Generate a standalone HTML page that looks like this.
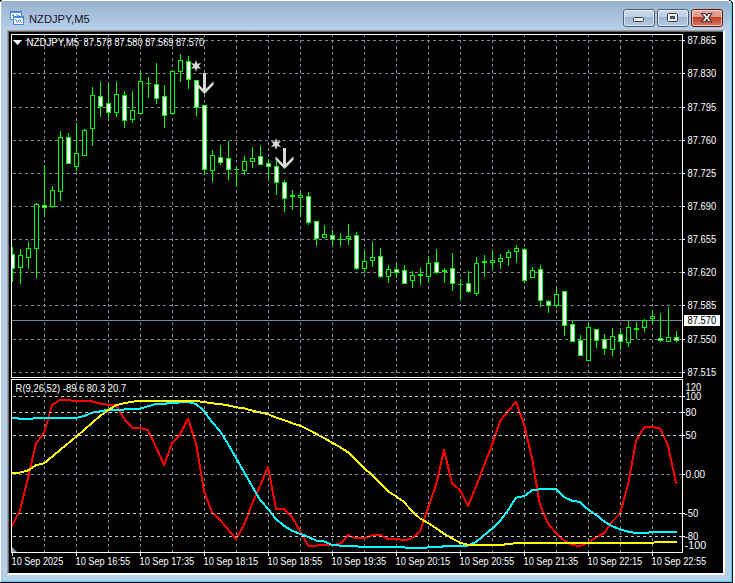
<!DOCTYPE html>
<html><head><meta charset="utf-8"><title>NZDJPY,M5</title>
<style>html,body{margin:0;padding:0;width:735px;height:583px;overflow:hidden;background:#fff} svg{display:block}</style>
</head><body><svg width="735" height="583" viewBox="0 0 735 583"><rect x="0" y="0" width="735" height="583" fill="#ffffff" />
<defs>
<linearGradient id="tb" x1="0" y1="0" x2="0" y2="1">
<stop offset="0" stop-color="#97b1ce"/><stop offset="1" stop-color="#bad0e9"/></linearGradient>
<linearGradient id="btn" x1="0" y1="0" x2="0" y2="1">
<stop offset="0" stop-color="#c9daee"/><stop offset="0.45" stop-color="#bccfe6"/><stop offset="0.46" stop-color="#9db6d3"/><stop offset="1" stop-color="#b9cde6"/></linearGradient>
<linearGradient id="cls" x1="0" y1="0" x2="0" y2="1">
<stop offset="0" stop-color="#eaa99a"/><stop offset="0.45" stop-color="#e29482"/><stop offset="0.46" stop-color="#bf3f22"/><stop offset="1" stop-color="#d77c66"/></linearGradient>
</defs>
<rect x="1" y="1" width="731" height="581" fill="#b9cfe8" />
<rect x="1" y="1" width="731" height="29" fill="url(#tb)" />
<rect x="1" y="1" width="1" height="580" fill="#b2c9e5" />
<rect x="731" y="2" width="1" height="580" fill="#44cdf5" />
<rect x="732" y="2" width="1" height="581" fill="#1c1414" />
<rect x="1" y="581" width="731" height="1" fill="#44cdf5" />
<rect x="0" y="582" width="733" height="1" fill="#141010" />
<rect x="0" y="0" width="2" height="1" fill="#262626" />
<rect x="0" y="1" width="1" height="1" fill="#262626" />
<rect x="1" y="1" width="1" height="1" fill="#d8e4f0" />
<rect x="2" y="1" width="1" height="1" fill="#a8bfdc" />
<rect x="1" y="2" width="1" height="1" fill="#a8bfdc" />
<rect x="729" y="0" width="2" height="1" fill="#1e2a2a" />
<rect x="729" y="1" width="2" height="2" fill="#b8ecfa" />
<rect x="731" y="1" width="1" height="2" fill="#1e2a2a" />
<rect x="733" y="0" width="2" height="583" fill="#ffffff" />
<rect x="7" y="30" width="718" height="545" fill="#ffffff" />
<rect x="7" y="30" width="717" height="1" fill="#a0a0a0" />
<rect x="7" y="30" width="1" height="544" fill="#a0a0a0" />
<rect x="8" y="31" width="715" height="1" fill="#696969" />
<rect x="8" y="31" width="1" height="542" fill="#696969" />
<rect x="9" y="32" width="714" height="541" fill="#000000" />
<g shape-rendering="crispEdges">
<rect x="10" y="11" width="12" height="9" fill="#4a86f4"/>
<rect x="11" y="13" width="10" height="6" fill="#fffff6"/>
<rect x="13" y="16" width="11" height="9" fill="#4a86f4"/>
<rect x="14" y="18" width="9" height="6" fill="#fffff6"/>
<rect x="12" y="11" width="1" height="1" fill="#3a8a6a"/><rect x="16" y="11" width="1" height="1" fill="#3a8a6a"/><rect x="20" y="11" width="1" height="1" fill="#3a8a6a"/>
<rect x="10" y="13" width="1" height="1" fill="#3a8a6a"/><rect x="10" y="17" width="1" height="1" fill="#3a8a6a"/>
<rect x="15" y="16" width="1" height="1" fill="#3a8a6a"/><rect x="19" y="16" width="1" height="1" fill="#3a8a6a"/><rect x="23" y="18" width="1" height="1" fill="#3a8a6a"/>
<rect x="13" y="20" width="1" height="1" fill="#3a8a6a"/><rect x="13" y="23" width="1" height="1" fill="#3a8a6a"/><rect x="17" y="24" width="1" height="1" fill="#3a8a6a"/><rect x="21" y="24" width="1" height="1" fill="#3a8a6a"/>
<rect x="12" y="15" width="2" height="1" fill="#4a86f4"/><rect x="13" y="14" width="1" height="1" fill="#4a86f4"/><rect x="16" y="14" width="1" height="1" fill="#4a86f4"/><rect x="17" y="15" width="2" height="1" fill="#4a86f4"/>
<rect x="15" y="19" width="1" height="1" fill="#4a86f4"/><rect x="16" y="20" width="1" height="2" fill="#4a86f4"/><rect x="17" y="22" width="1" height="1" fill="#4a86f4"/><rect x="18" y="20" width="1" height="2" fill="#4a86f4"/><rect x="19" y="19" width="1" height="1" fill="#4a86f4"/><rect x="20" y="20" width="1" height="2" fill="#4a86f4"/><rect x="21" y="22" width="1" height="1" fill="#4a86f4"/>
</g>
<text x="29" y="23" font-family='"Liberation Sans", sans-serif' font-size="11.2px" fill="#14142a">NZDJPY,M5</text>
<rect x="623.5" y="9.5" width="31" height="17" rx="2.5" fill="url(#btn)" stroke="#515d72" stroke-width="1"/>
<rect x="624.5" y="10.5" width="29" height="15" rx="1.5" fill="none" stroke="rgba(255,255,255,0.55)" stroke-width="1"/>
<rect x="657.5" y="9.5" width="31" height="17" rx="2.5" fill="url(#btn)" stroke="#515d72" stroke-width="1"/>
<rect x="658.5" y="10.5" width="29" height="15" rx="1.5" fill="none" stroke="rgba(255,255,255,0.55)" stroke-width="1"/>
<rect x="691.5" y="9.5" width="31" height="17" rx="2.5" fill="url(#cls)" stroke="#5a1a1a" stroke-width="1"/>
<rect x="692.5" y="10.5" width="29" height="15" rx="1.5" fill="none" stroke="rgba(255,255,255,0.55)" stroke-width="1"/>
<rect x="633.5" y="17.5" width="10" height="4" rx="1" fill="#eeeeea" stroke="#3a3f4c" stroke-width="1"/>
<rect x="667.5" y="13.5" width="10" height="8" rx="1" fill="#eeeeea" stroke="#3a3f4c" stroke-width="1"/>
<rect x="670.5" y="16.5" width="4" height="2" fill="#6a7890" stroke="#3a3f4c" stroke-width="1"/>
<path d="M701.5 13.5 L705.2 13.5 L706.8 15.6 L708.4 13.5 L712 13.5 L708.8 17.6 L712 21.8 L708.4 21.8 L706.8 19.6 L705.2 21.8 L701.5 21.8 L704.8 17.6 Z" fill="#f4f4f4" stroke="#3c3040" stroke-width="1.1" stroke-linejoin="round"/>
<g shape-rendering="crispEdges" fill="none" stroke-width="1"><path d="M13 40.5H682" stroke="#7d8a99" stroke-dasharray="3 3"/><path d="M13 73.5H682" stroke="#7d8a99" stroke-dasharray="3 3"/><path d="M13 107.5H682" stroke="#7d8a99" stroke-dasharray="3 3"/><path d="M13 140.5H682" stroke="#7d8a99" stroke-dasharray="3 3"/><path d="M13 173.5H682" stroke="#7d8a99" stroke-dasharray="3 3"/><path d="M13 206.5H682" stroke="#7d8a99" stroke-dasharray="3 3"/><path d="M13 239.5H682" stroke="#7d8a99" stroke-dasharray="3 3"/><path d="M13 272.5H682" stroke="#7d8a99" stroke-dasharray="3 3"/><path d="M13 305.5H682" stroke="#7d8a99" stroke-dasharray="3 3"/><path d="M13 339.5H682" stroke="#7d8a99" stroke-dasharray="3 3"/><path d="M13 372.5H682" stroke="#7d8a99" stroke-dasharray="3 3"/><path d="M44.5 34V377" stroke="#7d8a99" stroke-dasharray="3 3"/><path d="M76.5 34V377" stroke="#7d8a99" stroke-dasharray="3 3"/><path d="M108.5 34V377" stroke="#7d8a99" stroke-dasharray="3 3"/><path d="M140.5 34V377" stroke="#7d8a99" stroke-dasharray="3 3"/><path d="M172.5 34V377" stroke="#7d8a99" stroke-dasharray="3 3"/><path d="M204.5 34V377" stroke="#7d8a99" stroke-dasharray="3 3"/><path d="M236.5 34V377" stroke="#7d8a99" stroke-dasharray="3 3"/><path d="M268.5 34V377" stroke="#7d8a99" stroke-dasharray="3 3"/><path d="M300.5 34V377" stroke="#7d8a99" stroke-dasharray="3 3"/><path d="M332.5 34V377" stroke="#7d8a99" stroke-dasharray="3 3"/><path d="M364.5 34V377" stroke="#7d8a99" stroke-dasharray="3 3"/><path d="M396.5 34V377" stroke="#7d8a99" stroke-dasharray="3 3"/><path d="M428.5 34V377" stroke="#7d8a99" stroke-dasharray="3 3"/><path d="M460.5 34V377" stroke="#7d8a99" stroke-dasharray="3 3"/><path d="M492.5 34V377" stroke="#7d8a99" stroke-dasharray="3 3"/><path d="M524.5 34V377" stroke="#7d8a99" stroke-dasharray="3 3"/><path d="M556.5 34V377" stroke="#7d8a99" stroke-dasharray="3 3"/><path d="M588.5 34V377" stroke="#7d8a99" stroke-dasharray="3 3"/><path d="M620.5 34V377" stroke="#7d8a99" stroke-dasharray="3 3"/><path d="M652.5 34V377" stroke="#7d8a99" stroke-dasharray="3 3"/><path d="M13 474.5H682" stroke="#7d8a99" stroke-dasharray="3 3"/><path d="M44.5 382V552" stroke="#7d8a99" stroke-dasharray="3 3"/><path d="M76.5 382V552" stroke="#7d8a99" stroke-dasharray="3 3"/><path d="M108.5 382V552" stroke="#7d8a99" stroke-dasharray="3 3"/><path d="M140.5 382V552" stroke="#7d8a99" stroke-dasharray="3 3"/><path d="M172.5 382V552" stroke="#7d8a99" stroke-dasharray="3 3"/><path d="M204.5 382V552" stroke="#7d8a99" stroke-dasharray="3 3"/><path d="M236.5 382V552" stroke="#7d8a99" stroke-dasharray="3 3"/><path d="M268.5 382V552" stroke="#7d8a99" stroke-dasharray="3 3"/><path d="M300.5 382V552" stroke="#7d8a99" stroke-dasharray="3 3"/><path d="M332.5 382V552" stroke="#7d8a99" stroke-dasharray="3 3"/><path d="M364.5 382V552" stroke="#7d8a99" stroke-dasharray="3 3"/><path d="M396.5 382V552" stroke="#7d8a99" stroke-dasharray="3 3"/><path d="M428.5 382V552" stroke="#7d8a99" stroke-dasharray="3 3"/><path d="M460.5 382V552" stroke="#7d8a99" stroke-dasharray="3 3"/><path d="M492.5 382V552" stroke="#7d8a99" stroke-dasharray="3 3"/><path d="M524.5 382V552" stroke="#7d8a99" stroke-dasharray="3 3"/><path d="M556.5 382V552" stroke="#7d8a99" stroke-dasharray="3 3"/><path d="M588.5 382V552" stroke="#7d8a99" stroke-dasharray="3 3"/><path d="M620.5 382V552" stroke="#7d8a99" stroke-dasharray="3 3"/><path d="M652.5 382V552" stroke="#7d8a99" stroke-dasharray="3 3"/></g>
<g shape-rendering="crispEdges"><rect x="12" y="320" width="670" height="1" fill="#778899"/><rect x="12" y="247" width="1" height="35" fill="#00ff00"/><rect x="10" y="254" width="5" height="15" fill="#00ff00"/><rect x="11" y="255" width="3" height="13" fill="#ffffff"/><rect x="20" y="249" width="1" height="35" fill="#00ff00"/><rect x="18" y="255" width="5" height="13" fill="#00ff00"/><rect x="19" y="256" width="3" height="11" fill="#000000"/><rect x="28" y="242" width="1" height="27" fill="#00ff00"/><rect x="26" y="248" width="5" height="10" fill="#00ff00"/><rect x="27" y="249" width="3" height="8" fill="#000000"/><rect x="36" y="203" width="1" height="75" fill="#00ff00"/><rect x="34" y="204" width="5" height="45" fill="#00ff00"/><rect x="35" y="205" width="3" height="43" fill="#000000"/><rect x="44" y="165" width="1" height="49" fill="#00ff00"/><rect x="42" y="205" width="5" height="3" fill="#00ff00"/><rect x="43" y="206" width="3" height="1" fill="#ffffff"/><rect x="52" y="186" width="1" height="22" fill="#00ff00"/><rect x="50" y="190" width="5" height="17" fill="#00ff00"/><rect x="51" y="191" width="3" height="15" fill="#000000"/><rect x="60" y="131" width="1" height="70" fill="#00ff00"/><rect x="58" y="137" width="5" height="55" fill="#00ff00"/><rect x="59" y="138" width="3" height="53" fill="#000000"/><rect x="68" y="133" width="1" height="31" fill="#00ff00"/><rect x="66" y="137" width="5" height="27" fill="#00ff00"/><rect x="67" y="138" width="3" height="25" fill="#ffffff"/><rect x="76" y="123" width="1" height="48" fill="#00ff00"/><rect x="74" y="153" width="5" height="14" fill="#00ff00"/><rect x="75" y="154" width="3" height="12" fill="#000000"/><rect x="84" y="129" width="1" height="27" fill="#00ff00"/><rect x="82" y="130" width="5" height="26" fill="#00ff00"/><rect x="83" y="131" width="3" height="24" fill="#000000"/><rect x="92" y="87" width="1" height="59" fill="#00ff00"/><rect x="90" y="95" width="5" height="34" fill="#00ff00"/><rect x="91" y="96" width="3" height="32" fill="#000000"/><rect x="100" y="82" width="1" height="35" fill="#00ff00"/><rect x="98" y="96" width="5" height="11" fill="#00ff00"/><rect x="99" y="97" width="3" height="9" fill="#ffffff"/><rect x="108" y="84" width="1" height="35" fill="#00ff00"/><rect x="106" y="103" width="5" height="10" fill="#00ff00"/><rect x="107" y="104" width="3" height="8" fill="#ffffff"/><rect x="116" y="82" width="1" height="35" fill="#00ff00"/><rect x="114" y="94" width="5" height="19" fill="#00ff00"/><rect x="115" y="95" width="3" height="17" fill="#000000"/><rect x="124" y="91" width="1" height="37" fill="#00ff00"/><rect x="122" y="95" width="5" height="26" fill="#00ff00"/><rect x="123" y="96" width="3" height="24" fill="#ffffff"/><rect x="132" y="91" width="1" height="32" fill="#00ff00"/><rect x="130" y="110" width="5" height="10" fill="#00ff00"/><rect x="131" y="111" width="3" height="8" fill="#000000"/><rect x="140" y="73" width="1" height="41" fill="#00ff00"/><rect x="138" y="81" width="5" height="33" fill="#00ff00"/><rect x="139" y="82" width="3" height="31" fill="#000000"/><rect x="148" y="77" width="1" height="21" fill="#00ff00"/><rect x="146" y="83" width="5" height="1" fill="#00ff00"/><rect x="156" y="63" width="1" height="41" fill="#00ff00"/><rect x="154" y="84" width="5" height="15" fill="#00ff00"/><rect x="155" y="85" width="3" height="13" fill="#ffffff"/><rect x="164" y="85" width="1" height="43" fill="#00ff00"/><rect x="162" y="96" width="5" height="20" fill="#00ff00"/><rect x="163" y="97" width="3" height="18" fill="#ffffff"/><rect x="172" y="70" width="1" height="45" fill="#00ff00"/><rect x="170" y="71" width="5" height="43" fill="#00ff00"/><rect x="171" y="72" width="3" height="41" fill="#000000"/><rect x="180" y="54" width="1" height="28" fill="#00ff00"/><rect x="178" y="60" width="5" height="12" fill="#00ff00"/><rect x="179" y="61" width="3" height="10" fill="#000000"/><rect x="188" y="56" width="1" height="33" fill="#00ff00"/><rect x="186" y="61" width="5" height="19" fill="#00ff00"/><rect x="187" y="62" width="3" height="17" fill="#ffffff"/><rect x="196" y="80" width="1" height="36" fill="#00ff00"/><rect x="194" y="80" width="5" height="28" fill="#00ff00"/><rect x="195" y="81" width="3" height="26" fill="#ffffff"/><rect x="204" y="105" width="1" height="70" fill="#00ff00"/><rect x="202" y="105" width="5" height="65" fill="#00ff00"/><rect x="203" y="106" width="3" height="63" fill="#ffffff"/><rect x="212" y="150" width="1" height="32" fill="#00ff00"/><rect x="210" y="155" width="5" height="16" fill="#00ff00"/><rect x="211" y="156" width="3" height="14" fill="#000000"/><rect x="220" y="145" width="1" height="20" fill="#00ff00"/><rect x="218" y="157" width="5" height="6" fill="#00ff00"/><rect x="219" y="158" width="3" height="4" fill="#ffffff"/><rect x="228" y="141" width="1" height="39" fill="#00ff00"/><rect x="226" y="158" width="5" height="12" fill="#00ff00"/><rect x="227" y="159" width="3" height="10" fill="#ffffff"/><rect x="236" y="167" width="1" height="20" fill="#00ff00"/><rect x="234" y="169" width="5" height="1" fill="#00ff00"/><rect x="244" y="156" width="1" height="19" fill="#00ff00"/><rect x="242" y="161" width="5" height="10" fill="#00ff00"/><rect x="243" y="162" width="3" height="8" fill="#000000"/><rect x="252" y="147" width="1" height="21" fill="#00ff00"/><rect x="250" y="158" width="5" height="4" fill="#00ff00"/><rect x="251" y="159" width="3" height="2" fill="#000000"/><rect x="260" y="146" width="1" height="19" fill="#00ff00"/><rect x="258" y="156" width="5" height="9" fill="#00ff00"/><rect x="259" y="157" width="3" height="7" fill="#ffffff"/><rect x="268" y="159" width="1" height="22" fill="#00ff00"/><rect x="266" y="163" width="5" height="4" fill="#00ff00"/><rect x="267" y="164" width="3" height="2" fill="#ffffff"/><rect x="276" y="161" width="1" height="34" fill="#00ff00"/><rect x="274" y="166" width="5" height="17" fill="#00ff00"/><rect x="275" y="167" width="3" height="15" fill="#ffffff"/><rect x="284" y="180" width="1" height="32" fill="#00ff00"/><rect x="282" y="182" width="5" height="17" fill="#00ff00"/><rect x="283" y="183" width="3" height="15" fill="#ffffff"/><rect x="292" y="190" width="1" height="20" fill="#00ff00"/><rect x="290" y="195" width="5" height="2" fill="#00ff00"/><rect x="300" y="193" width="1" height="23" fill="#00ff00"/><rect x="298" y="195" width="5" height="3" fill="#00ff00"/><rect x="299" y="196" width="3" height="1" fill="#000000"/><rect x="308" y="192" width="1" height="33" fill="#00ff00"/><rect x="306" y="196" width="5" height="27" fill="#00ff00"/><rect x="307" y="197" width="3" height="25" fill="#ffffff"/><rect x="316" y="221" width="1" height="25" fill="#00ff00"/><rect x="314" y="221" width="5" height="18" fill="#00ff00"/><rect x="315" y="222" width="3" height="16" fill="#ffffff"/><rect x="324" y="225" width="1" height="13" fill="#00ff00"/><rect x="322" y="234" width="5" height="4" fill="#00ff00"/><rect x="323" y="235" width="3" height="2" fill="#000000"/><rect x="332" y="230" width="1" height="16" fill="#00ff00"/><rect x="330" y="235" width="5" height="5" fill="#00ff00"/><rect x="331" y="236" width="3" height="3" fill="#ffffff"/><rect x="340" y="233" width="1" height="13" fill="#00ff00"/><rect x="338" y="239" width="5" height="1" fill="#00ff00"/><rect x="348" y="224" width="1" height="21" fill="#00ff00"/><rect x="346" y="236" width="5" height="3" fill="#00ff00"/><rect x="347" y="237" width="3" height="1" fill="#000000"/><rect x="356" y="232" width="1" height="38" fill="#00ff00"/><rect x="354" y="235" width="5" height="34" fill="#00ff00"/><rect x="355" y="236" width="3" height="32" fill="#ffffff"/><rect x="364" y="250" width="1" height="23" fill="#00ff00"/><rect x="362" y="261" width="5" height="8" fill="#00ff00"/><rect x="363" y="262" width="3" height="6" fill="#000000"/><rect x="372" y="242" width="1" height="25" fill="#00ff00"/><rect x="370" y="257" width="5" height="4" fill="#00ff00"/><rect x="371" y="258" width="3" height="2" fill="#000000"/><rect x="380" y="248" width="1" height="30" fill="#00ff00"/><rect x="378" y="256" width="5" height="21" fill="#00ff00"/><rect x="379" y="257" width="3" height="19" fill="#ffffff"/><rect x="388" y="265" width="1" height="18" fill="#00ff00"/><rect x="386" y="269" width="5" height="8" fill="#00ff00"/><rect x="387" y="270" width="3" height="6" fill="#000000"/><rect x="396" y="263" width="1" height="15" fill="#00ff00"/><rect x="394" y="269" width="5" height="4" fill="#00ff00"/><rect x="395" y="270" width="3" height="2" fill="#ffffff"/><rect x="404" y="265" width="1" height="19" fill="#00ff00"/><rect x="402" y="270" width="5" height="14" fill="#00ff00"/><rect x="403" y="271" width="3" height="12" fill="#ffffff"/><rect x="412" y="271" width="1" height="17" fill="#00ff00"/><rect x="410" y="275" width="5" height="6" fill="#00ff00"/><rect x="411" y="276" width="3" height="4" fill="#000000"/><rect x="420" y="268" width="1" height="17" fill="#00ff00"/><rect x="418" y="274" width="5" height="2" fill="#00ff00"/><rect x="428" y="256" width="1" height="27" fill="#00ff00"/><rect x="426" y="263" width="5" height="14" fill="#00ff00"/><rect x="427" y="264" width="3" height="12" fill="#000000"/><rect x="436" y="249" width="1" height="25" fill="#00ff00"/><rect x="434" y="262" width="5" height="11" fill="#00ff00"/><rect x="435" y="263" width="3" height="9" fill="#ffffff"/><rect x="444" y="268" width="1" height="15" fill="#00ff00"/><rect x="442" y="270" width="5" height="2" fill="#00ff00"/><rect x="452" y="253" width="1" height="38" fill="#00ff00"/><rect x="450" y="268" width="5" height="16" fill="#00ff00"/><rect x="451" y="269" width="3" height="14" fill="#ffffff"/><rect x="460" y="279" width="1" height="21" fill="#00ff00"/><rect x="458" y="284" width="5" height="1" fill="#00ff00"/><rect x="468" y="271" width="1" height="22" fill="#00ff00"/><rect x="466" y="283" width="5" height="9" fill="#00ff00"/><rect x="467" y="284" width="3" height="7" fill="#ffffff"/><rect x="476" y="257" width="1" height="39" fill="#00ff00"/><rect x="474" y="263" width="5" height="31" fill="#00ff00"/><rect x="475" y="264" width="3" height="29" fill="#000000"/><rect x="484" y="255" width="1" height="22" fill="#00ff00"/><rect x="482" y="261" width="5" height="2" fill="#00ff00"/><rect x="492" y="251" width="1" height="18" fill="#00ff00"/><rect x="490" y="260" width="5" height="3" fill="#00ff00"/><rect x="491" y="261" width="3" height="1" fill="#000000"/><rect x="500" y="254" width="1" height="15" fill="#00ff00"/><rect x="498" y="258" width="5" height="4" fill="#00ff00"/><rect x="499" y="259" width="3" height="2" fill="#000000"/><rect x="508" y="250" width="1" height="16" fill="#00ff00"/><rect x="506" y="252" width="5" height="6" fill="#00ff00"/><rect x="507" y="253" width="3" height="4" fill="#000000"/><rect x="516" y="245" width="1" height="18" fill="#00ff00"/><rect x="514" y="248" width="5" height="4" fill="#00ff00"/><rect x="515" y="249" width="3" height="2" fill="#000000"/><rect x="524" y="248" width="1" height="35" fill="#00ff00"/><rect x="522" y="249" width="5" height="32" fill="#00ff00"/><rect x="523" y="250" width="3" height="30" fill="#ffffff"/><rect x="532" y="267" width="1" height="11" fill="#00ff00"/><rect x="530" y="270" width="5" height="8" fill="#00ff00"/><rect x="531" y="271" width="3" height="6" fill="#000000"/><rect x="540" y="265" width="1" height="42" fill="#00ff00"/><rect x="538" y="269" width="5" height="32" fill="#00ff00"/><rect x="539" y="270" width="3" height="30" fill="#ffffff"/><rect x="548" y="300" width="1" height="13" fill="#00ff00"/><rect x="546" y="301" width="5" height="5" fill="#00ff00"/><rect x="547" y="302" width="3" height="3" fill="#ffffff"/><rect x="556" y="288" width="1" height="20" fill="#00ff00"/><rect x="554" y="294" width="5" height="12" fill="#00ff00"/><rect x="555" y="295" width="3" height="10" fill="#000000"/><rect x="564" y="291" width="1" height="45" fill="#00ff00"/><rect x="562" y="291" width="5" height="35" fill="#00ff00"/><rect x="563" y="292" width="3" height="33" fill="#ffffff"/><rect x="572" y="321" width="1" height="21" fill="#00ff00"/><rect x="570" y="324" width="5" height="18" fill="#00ff00"/><rect x="571" y="325" width="3" height="16" fill="#ffffff"/><rect x="580" y="335" width="1" height="21" fill="#00ff00"/><rect x="578" y="340" width="5" height="16" fill="#00ff00"/><rect x="579" y="341" width="3" height="14" fill="#ffffff"/><rect x="588" y="324" width="1" height="37" fill="#00ff00"/><rect x="586" y="327" width="5" height="34" fill="#00ff00"/><rect x="587" y="328" width="3" height="32" fill="#000000"/><rect x="596" y="329" width="1" height="19" fill="#00ff00"/><rect x="594" y="329" width="5" height="12" fill="#00ff00"/><rect x="595" y="330" width="3" height="10" fill="#ffffff"/><rect x="604" y="334" width="1" height="21" fill="#00ff00"/><rect x="602" y="339" width="5" height="10" fill="#00ff00"/><rect x="603" y="340" width="3" height="8" fill="#ffffff"/><rect x="612" y="328" width="1" height="28" fill="#00ff00"/><rect x="610" y="336" width="5" height="14" fill="#00ff00"/><rect x="611" y="337" width="3" height="12" fill="#000000"/><rect x="620" y="330" width="1" height="20" fill="#00ff00"/><rect x="618" y="334" width="5" height="8" fill="#00ff00"/><rect x="619" y="335" width="3" height="6" fill="#ffffff"/><rect x="628" y="321" width="1" height="26" fill="#00ff00"/><rect x="626" y="327" width="5" height="16" fill="#00ff00"/><rect x="627" y="328" width="3" height="14" fill="#000000"/><rect x="636" y="322" width="1" height="17" fill="#00ff00"/><rect x="634" y="328" width="5" height="2" fill="#00ff00"/><rect x="644" y="319" width="1" height="13" fill="#00ff00"/><rect x="642" y="320" width="5" height="8" fill="#00ff00"/><rect x="643" y="321" width="3" height="6" fill="#000000"/><rect x="652" y="310" width="1" height="14" fill="#00ff00"/><rect x="650" y="316" width="5" height="3" fill="#00ff00"/><rect x="651" y="317" width="3" height="1" fill="#000000"/><rect x="660" y="313" width="1" height="29" fill="#00ff00"/><rect x="658" y="338" width="5" height="3" fill="#00ff00"/><rect x="659" y="339" width="3" height="1" fill="#ffffff"/><rect x="668" y="307" width="1" height="35" fill="#00ff00"/><rect x="666" y="337" width="5" height="5" fill="#00ff00"/><rect x="667" y="338" width="3" height="3" fill="#000000"/><rect x="676" y="331" width="1" height="11" fill="#00ff00"/><rect x="674" y="337" width="5" height="4" fill="#00ff00"/><rect x="675" y="338" width="3" height="2" fill="#ffffff"/><rect x="9" y="34" width="2" height="343" fill="#000"/><rect x="11" y="34" width="672" height="1" fill="#fff"/><rect x="11" y="34" width="1" height="344" fill="#fff"/><rect x="682" y="34" width="1" height="344" fill="#fff"/><rect x="11" y="377" width="672" height="1" fill="#fff"/><rect x="11" y="379" width="672" height="1" fill="#fff"/><rect x="11" y="379" width="1" height="174" fill="#fff"/><rect x="682" y="379" width="1" height="174" fill="#fff"/><rect x="11" y="552" width="672" height="1" fill="#fff"/></g>
<g clip-path="url(#ic)">
<clipPath id="ic"><rect x="12" y="380" width="670" height="172"/></clipPath>
<polyline points="12,525.7 20,510.2 28,477.8 36,443.4 44,433.1 52,405.0 60,399.9 68,399.9 76,401.4 84,401.4 92,401.4 100,403.6 108,404.8 116,405.0 124,418.5 132,427.5 140,427.9 148,430.1 156,447.1 164,464.8 172,443.4 180,434.6 188,418.6 196,443.4 204,491.1 212,512.5 220,520.0 228,529.4 236,539.0 244,525.0 252,504.0 260,486.0 268,467.0 276,508.8 284,508.8 292,516.9 300,531.0 308,545.6 316,545.6 324,545.0 332,544.9 340,544.2 348,535.3 356,538.3 364,538.3 372,535.3 380,534.6 388,539.4 396,538.6 404,540.5 412,538.3 420,531.6 428,508.0 436,485.2 444,450.0 452,483.0 460,490.3 468,505.8 476,486.6 484,465.5 492,445.0 500,421.3 508,411.0 516,402.1 524,424.2 532,458.0 540,505.1 548,523.5 556,533.1 564,540.5 572,544.9 580,546.0 588,542.7 596,537.5 604,533.1 612,521.5 620,513.5 628,485.0 636,441.0 644,427.5 652,426.9 660,428.4 668,445.6 676,483.0" fill="none" stroke="#ff0000" stroke-width="2" stroke-linejoin="round" stroke-linecap="round" shape-rendering="crispEdges"/>
<polyline points="12,418.1 20,418.6 28,419.1 36,418.1 44,418.1 52,418.1 60,418.1 68,418.1 76,418.1 84,416.1 92,412.7 100,411.3 108,409.9 116,409.9 124,409.5 132,408.8 140,408.8 148,406.3 156,404.0 164,403.6 172,403.3 180,402.4 188,402.1 196,403.9 204,411.0 212,422.0 220,431.0 228,444.0 236,458.0 244,472.0 252,486.0 260,500.0 268,508.8 276,519.1 284,525.7 292,530.9 300,533.8 308,536.8 316,540.5 324,541.5 332,544.9 340,545.6 348,546.0 356,546.4 364,546.8 372,546.8 380,546.8 388,546.8 396,546.8 404,547.4 412,548.3 420,548.3 428,547.4 436,547.0 444,546.4 452,545.6 460,545.6 468,545.6 476,542.0 484,535.3 492,528.7 500,521.3 508,510.2 516,497.7 524,496.2 532,490.3 540,489.3 548,489.3 556,489.3 564,497.0 572,500.7 580,502.1 588,509.5 596,514.7 604,521.3 612,526.0 620,529.4 628,531.6 636,533.1 644,533.1 652,532.1 660,532.1 668,532.1 676,532.1" fill="none" stroke="#00ffff" stroke-width="2" stroke-linejoin="round" stroke-linecap="round" shape-rendering="crispEdges"/>
<polyline points="12,472.6 20,472.6 28,470.4 36,465.2 44,463.3 52,456.7 60,450.0 68,443.4 76,436.8 84,430.1 92,422.8 100,416.1 108,410.2 116,405.3 124,403.3 132,401.8 140,400.6 148,400.6 156,400.6 164,400.6 172,400.6 180,400.6 188,400.6 196,400.9 204,402.1 212,403.3 220,404.0 228,405.4 236,407.3 244,408.3 252,410.5 260,412.4 268,414.2 276,417.6 284,420.1 292,423.1 300,425.7 308,429.4 316,433.8 324,438.0 332,442.7 340,447.1 348,452.3 356,459.6 364,468.2 372,474.8 380,483.0 388,491.4 396,496.2 404,502.1 412,511.0 420,518.4 428,523.0 436,528.0 444,533.8 452,538.3 460,542.7 468,544.9 476,544.9 484,544.9 492,544.9 500,544.9 508,544.2 516,543.0 524,542.7 532,542.7 540,542.7 548,542.7 556,542.7 564,542.7 572,542.7 580,542.7 588,542.7 596,542.7 604,542.7 612,542.7 620,542.7 628,542.7 636,542.7 644,542.7 652,542.7 660,542.0 668,542.0 676,542.0" fill="none" stroke="#ffff00" stroke-width="2" stroke-linejoin="round" stroke-linecap="round" shape-rendering="crispEdges"/>
</g>
<g shape-rendering="crispEdges" fill="none" stroke-width="1"><path d="M13 396.5H682" stroke="#c8c8c8" stroke-dasharray="3 3"/><path d="M13 412.5H682" stroke="#c8c8c8" stroke-dasharray="3 3"/><path d="M13 435.5H682" stroke="#c8c8c8" stroke-dasharray="3 3"/><path d="M13 513.5H682" stroke="#c8c8c8" stroke-dasharray="3 3"/><path d="M13 536.5H682" stroke="#c8c8c8" stroke-dasharray="3 3"/></g>
<path d="M12 547 L17 552 L12 552 Z" fill="#8899aa"/>
<polygon points="196.00,60.00 194.70,63.65 190.89,62.95 193.40,65.90 190.89,68.85 194.70,68.15 196.00,71.80 197.30,68.15 201.11,68.85 198.60,65.90 201.11,62.95 197.30,63.65" fill="#d6d6d6"/>
<g transform="translate(0,0)" fill="#d8d8d8"><rect x="203" y="73" width="3" height="18"/><polygon points="195.5,81.2 204.5,90.2 213.5,81.2 213.5,84.8 204.5,94 195.5,84.8"/></g>
<polygon points="276.00,138.10 274.70,141.75 270.89,141.05 273.40,144.00 270.89,146.95 274.70,146.25 276.00,149.90 277.30,146.25 281.11,146.95 278.60,144.00 281.11,141.05 277.30,141.75" fill="#d6d6d6"/>
<g transform="translate(80,75)" fill="#d8d8d8"><rect x="203" y="73" width="3" height="18"/><polygon points="195.5,81.2 204.5,90.2 213.5,81.2 213.5,84.8 204.5,94 195.5,84.8"/></g>
<path d="M13 40 L22 40 L17.5 45 Z" fill="#fff"/>
<text x="26.6" y="46" font-family='"Liberation Sans", sans-serif' font-size="10px" fill="#ffffff" textLength="52.6" lengthAdjust="spacingAndGlyphs">NZDJPY,M5</text>
<text x="83.6" y="46" font-family='"Liberation Sans", sans-serif' font-size="10px" fill="#ffffff" textLength="120.6" lengthAdjust="spacingAndGlyphs">87.578 87.580 87.569 87.570</text>
<rect x="683" y="40" width="2" height="1" fill="#fff"/>
<text x="687.6" y="44" font-family='"Liberation Sans", sans-serif' font-size="10px" fill="#ffffff" textLength="28.6" lengthAdjust="spacingAndGlyphs">87.865</text>
<rect x="683" y="73" width="2" height="1" fill="#fff"/>
<text x="687.6" y="77" font-family='"Liberation Sans", sans-serif' font-size="10px" fill="#ffffff" textLength="28.6" lengthAdjust="spacingAndGlyphs">87.830</text>
<rect x="683" y="107" width="2" height="1" fill="#fff"/>
<text x="687.6" y="111" font-family='"Liberation Sans", sans-serif' font-size="10px" fill="#ffffff" textLength="28.6" lengthAdjust="spacingAndGlyphs">87.795</text>
<rect x="683" y="140" width="2" height="1" fill="#fff"/>
<text x="687.6" y="144" font-family='"Liberation Sans", sans-serif' font-size="10px" fill="#ffffff" textLength="28.6" lengthAdjust="spacingAndGlyphs">87.760</text>
<rect x="683" y="173" width="2" height="1" fill="#fff"/>
<text x="687.6" y="177" font-family='"Liberation Sans", sans-serif' font-size="10px" fill="#ffffff" textLength="28.6" lengthAdjust="spacingAndGlyphs">87.725</text>
<rect x="683" y="206" width="2" height="1" fill="#fff"/>
<text x="687.6" y="210" font-family='"Liberation Sans", sans-serif' font-size="10px" fill="#ffffff" textLength="28.6" lengthAdjust="spacingAndGlyphs">87.690</text>
<rect x="683" y="239" width="2" height="1" fill="#fff"/>
<text x="687.6" y="243" font-family='"Liberation Sans", sans-serif' font-size="10px" fill="#ffffff" textLength="28.6" lengthAdjust="spacingAndGlyphs">87.655</text>
<rect x="683" y="272" width="2" height="1" fill="#fff"/>
<text x="687.6" y="276" font-family='"Liberation Sans", sans-serif' font-size="10px" fill="#ffffff" textLength="28.6" lengthAdjust="spacingAndGlyphs">87.620</text>
<rect x="683" y="305" width="2" height="1" fill="#fff"/>
<text x="687.6" y="309" font-family='"Liberation Sans", sans-serif' font-size="10px" fill="#ffffff" textLength="28.6" lengthAdjust="spacingAndGlyphs">87.585</text>
<rect x="683" y="339" width="2" height="1" fill="#fff"/>
<text x="687.6" y="343" font-family='"Liberation Sans", sans-serif' font-size="10px" fill="#ffffff" textLength="28.6" lengthAdjust="spacingAndGlyphs">87.550</text>
<rect x="683" y="372" width="2" height="1" fill="#fff"/>
<text x="687.6" y="376" font-family='"Liberation Sans", sans-serif' font-size="10px" fill="#ffffff" textLength="28.6" lengthAdjust="spacingAndGlyphs">87.515</text>
<rect x="684" y="315" width="36" height="11" fill="#ffffff"/>
<text x="687.6" y="324" font-family='"Liberation Sans", sans-serif' font-size="10px" fill="#000000" textLength="28.6" lengthAdjust="spacingAndGlyphs">87.570</text>
<text x="15.6" y="392" font-family='"Liberation Sans", sans-serif' font-size="10px" fill="#ffffff" textLength="110.6" lengthAdjust="spacingAndGlyphs">R(9,26,52) -89.6 80.3 20.7</text>
<text x="685.6" y="391" font-family='"Liberation Sans", sans-serif' font-size="10px" fill="#ffffff" textLength="15.6" lengthAdjust="spacingAndGlyphs">120</text>
<rect x="683" y="396" width="2" height="1" fill="#fff"/>
<text x="685.6" y="400" font-family='"Liberation Sans", sans-serif' font-size="10px" fill="#ffffff" textLength="15.6" lengthAdjust="spacingAndGlyphs">100</text>
<rect x="683" y="412" width="2" height="1" fill="#fff"/>
<text x="685.6" y="416" font-family='"Liberation Sans", sans-serif' font-size="10px" fill="#ffffff" textLength="10.6" lengthAdjust="spacingAndGlyphs">80</text>
<rect x="683" y="435" width="2" height="1" fill="#fff"/>
<text x="685.6" y="439" font-family='"Liberation Sans", sans-serif' font-size="10px" fill="#ffffff" textLength="10.6" lengthAdjust="spacingAndGlyphs">50</text>
<rect x="683" y="474" width="2" height="1" fill="#fff"/>
<text x="685.6" y="478" font-family='"Liberation Sans", sans-serif' font-size="10px" fill="#ffffff" textLength="19.6" lengthAdjust="spacingAndGlyphs">0.00</text>
<rect x="683" y="513" width="2" height="1" fill="#fff"/>
<text x="684.6" y="517" font-family='"Liberation Sans", sans-serif' font-size="10px" fill="#ffffff" textLength="13.6" lengthAdjust="spacingAndGlyphs">-50</text>
<rect x="683" y="536" width="2" height="1" fill="#fff"/>
<text x="684.6" y="540" font-family='"Liberation Sans", sans-serif' font-size="10px" fill="#ffffff" textLength="13.6" lengthAdjust="spacingAndGlyphs">-80</text>
<text x="684.6" y="549" font-family='"Liberation Sans", sans-serif' font-size="10px" fill="#ffffff" textLength="21.6" lengthAdjust="spacingAndGlyphs">-100</text>
<rect x="12" y="553" width="1" height="3" fill="#fff"/>
<text x="11.6" y="565" font-family='"Liberation Sans", sans-serif' font-size="10px" fill="#ffffff" textLength="51.6" lengthAdjust="spacingAndGlyphs">10 Sep 2025</text>
<rect x="76" y="553" width="1" height="3" fill="#fff"/>
<text x="75.6" y="565" font-family='"Liberation Sans", sans-serif' font-size="10px" fill="#ffffff" textLength="54.6" lengthAdjust="spacingAndGlyphs">10 Sep 16:55</text>
<rect x="140" y="553" width="1" height="3" fill="#fff"/>
<text x="139.6" y="565" font-family='"Liberation Sans", sans-serif' font-size="10px" fill="#ffffff" textLength="54.6" lengthAdjust="spacingAndGlyphs">10 Sep 17:35</text>
<rect x="204" y="553" width="1" height="3" fill="#fff"/>
<text x="203.6" y="565" font-family='"Liberation Sans", sans-serif' font-size="10px" fill="#ffffff" textLength="54.6" lengthAdjust="spacingAndGlyphs">10 Sep 18:15</text>
<rect x="268" y="553" width="1" height="3" fill="#fff"/>
<text x="267.6" y="565" font-family='"Liberation Sans", sans-serif' font-size="10px" fill="#ffffff" textLength="54.6" lengthAdjust="spacingAndGlyphs">10 Sep 18:55</text>
<rect x="332" y="553" width="1" height="3" fill="#fff"/>
<text x="331.6" y="565" font-family='"Liberation Sans", sans-serif' font-size="10px" fill="#ffffff" textLength="54.6" lengthAdjust="spacingAndGlyphs">10 Sep 19:35</text>
<rect x="396" y="553" width="1" height="3" fill="#fff"/>
<text x="395.6" y="565" font-family='"Liberation Sans", sans-serif' font-size="10px" fill="#ffffff" textLength="54.6" lengthAdjust="spacingAndGlyphs">10 Sep 20:15</text>
<rect x="460" y="553" width="1" height="3" fill="#fff"/>
<text x="459.6" y="565" font-family='"Liberation Sans", sans-serif' font-size="10px" fill="#ffffff" textLength="54.6" lengthAdjust="spacingAndGlyphs">10 Sep 20:55</text>
<rect x="524" y="553" width="1" height="3" fill="#fff"/>
<text x="523.6" y="565" font-family='"Liberation Sans", sans-serif' font-size="10px" fill="#ffffff" textLength="54.6" lengthAdjust="spacingAndGlyphs">10 Sep 21:35</text>
<rect x="588" y="553" width="1" height="3" fill="#fff"/>
<text x="587.6" y="565" font-family='"Liberation Sans", sans-serif' font-size="10px" fill="#ffffff" textLength="54.6" lengthAdjust="spacingAndGlyphs">10 Sep 22:15</text>
<rect x="652" y="553" width="1" height="3" fill="#fff"/>
<text x="651.6" y="565" font-family='"Liberation Sans", sans-serif' font-size="10px" fill="#ffffff" textLength="54.6" lengthAdjust="spacingAndGlyphs">10 Sep 22:55</text></svg></body></html>
